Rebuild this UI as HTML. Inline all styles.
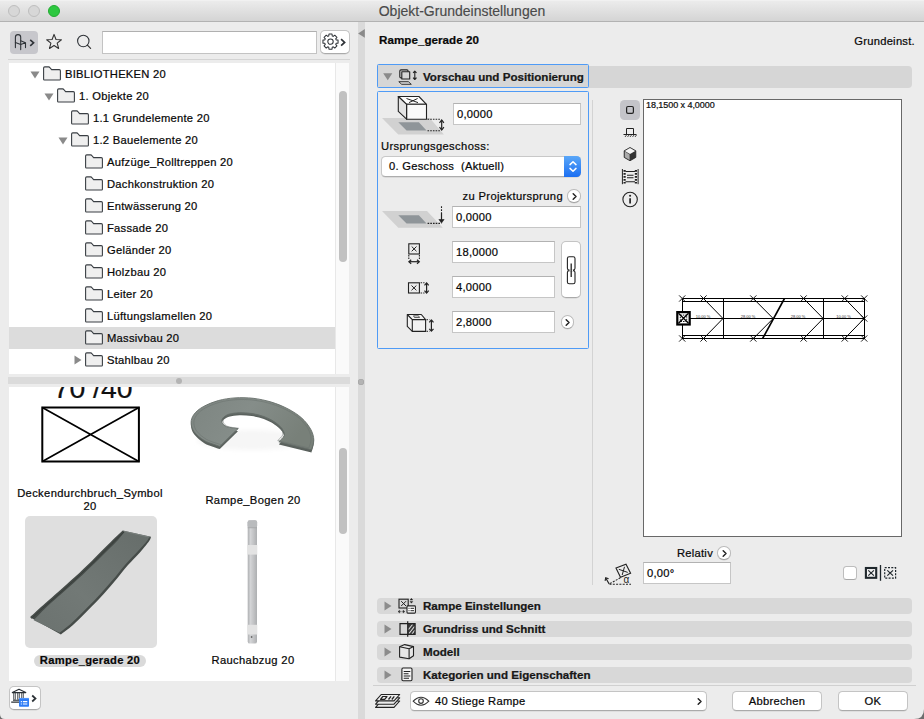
<!DOCTYPE html>
<html>
<head>
<meta charset="utf-8">
<title>Objekt-Grundeinstellungen</title>
<style>
*{box-sizing:border-box;margin:0;padding:0}
html,body{width:924px;height:719px;overflow:hidden;background:#ececec}
body{font-family:"Liberation Sans",sans-serif;font-size:11.2px;letter-spacing:0.270px;color:#080808;position:relative;-webkit-text-stroke:0.220px #080808}
.abs{position:absolute}
#titlebar{left:0;top:0;width:924px;height:22px;background:linear-gradient(#f4f4f4 0,#ebebeb 1.500px,#d4d4d4 100%);border-bottom:1px solid #b2b2b2}
#title{-webkit-text-stroke:0.150px #4a4a4a;left:0;top:3px;width:924px;text-align:center;font-size:14px;letter-spacing:0;color:#4a4a4a;line-height:16px}
.tl{width:12px;height:12px;border-radius:50%;top:5px}
/* left */
.tbtn{border-radius:4px}
#search{left:102px;top:31px;width:215px;height:22.500px;background:#fff;border:1px solid #c3c3c3;border-top-color:#b0b0b0}
#tree{left:9px;top:63px;width:327px;height:311px;background:#fff;overflow:hidden}
.track{background:#fafafa;border-left:1px solid #e8e8e8}
.thumb{background:#c1c1c1;border-radius:4px;width:7.600px}
.row{position:absolute;left:0;height:22px;width:327px;line-height:22px;white-space:nowrap}
.row span{position:absolute;top:0}
.row svg{position:absolute}
.sel{background:#dcdcdc}
#split{left:8px;top:377px;width:342px;height:7px;background:#dbdbdb}
#list{left:9px;top:387px;width:327px;height:294px;background:#fff;overflow:hidden}
#listin{position:absolute;left:0;top:-3px;width:327px;height:297px}
.lbl{position:absolute;text-align:center;white-space:nowrap;line-height:13px;letter-spacing:0.360px}
#vdiv{left:358.200px;top:22px;width:6.800px;height:697px;background:#dadada}
/* right */
.bar{left:377px;width:535px;height:15px;background:#d8d8d8;border-radius:4px}
.bt{font-weight:bold;font-size:11.6px;letter-spacing:0;line-height:15px;white-space:nowrap;color:#1a1a1a}
.inp{background:#fff;border:1px solid #c6c6c6;border-top-color:#b2b2b2;height:22px;line-height:20px;padding-left:3px;white-space:nowrap}
.btn{background:#fff;border:1px solid #c4c4c4;border-bottom-color:#aaa;border-radius:4px;text-align:center;line-height:18px;box-shadow:0 0.5px 0.5px rgba(0,0,0,.12)}
.rbtn{width:13.400px;height:13.400px;margin-left:-0.300px;margin-top:-0.200px;box-shadow:0 0.500px 0.500px rgba(0,0,0,.12);border-radius:50%;background:#fff;border:1px solid #bcbcbc;border-bottom-color:#a4a4a4}
</style>
</head>
<body>
<!-- TITLE BAR -->
<div id="titlebar" class="abs"></div>
<div class="abs tl" style="left:7.700px;background:#d7d7d7;border:1px solid #bebebe"></div>
<div class="abs tl" style="left:27.500px;background:#d7d7d7;border:1px solid #bebebe"></div>
<div class="abs tl" style="left:47.7px;background:#2dc840;border:1px solid #22ab31"></div>
<div id="title" class="abs">Objekt-Grundeinstellungen</div>

<!-- LEFT PANEL -->
<div id="left">
<!-- toolbar -->
<div class="abs tbtn" style="left:9.8px;top:30.6px;width:28.4px;height:23px;background:#c7c7cc"></div>
<svg class="abs" style="left:10px;top:31px" width="29" height="22" viewBox="0 0 29 22"><g fill="none" stroke="#2f3338" stroke-width="1.1" stroke-linejoin="round" stroke-linecap="round"><path d="M5.4 16.6V6.2Q5.4 3.6 8 3.6Q10.7 3.6 10.7 6.2V18.6"/><path d="M5.4 11.6L10.7 13.4L15.5 11.8V16.6M10.7 9.8L15.5 11.8"/><path d="M20.2 8.9L23.6 11.8L20.2 14.8" stroke-width="1.6" stroke-linecap="butt" stroke-linejoin="miter"/></g></svg>
<svg class="abs" style="left:44px;top:31px" width="22" height="22" viewBox="0 0 22 22"><path d="M10.05 3.40L11.99 8.48L17.42 8.76L13.19 12.17L14.61 17.42L10.05 14.45L5.49 17.42L6.91 12.17L2.68 8.76L8.11 8.48Z" fill="none" stroke="#333" stroke-width="1.1" stroke-linejoin="round"/></svg>
<svg class="abs" style="left:74px;top:31px" width="22" height="22" viewBox="0 0 22 22"><circle cx="9.3" cy="10" r="5.7" fill="none" stroke="#2f3338" stroke-width="1.1"/><path d="M13.4 14.1L16.6 17.3" stroke="#333" stroke-width="1.2" stroke-linecap="round"/></svg>
<div id="search" class="abs"></div>
<div class="abs btn" style="left:320px;top:30px;width:30px;height:23.800px;border-radius:5px"></div>
<svg class="abs" style="left:320.600px;top:30.200px" width="29" height="23" viewBox="0 0 29 23"><g fill="none" stroke="#2f3338" stroke-width="1.050" stroke-linejoin="round"><circle cx="9.50" cy="11.60" r="2.700"/><path d="M7.76 5.96L7.97 4.05L11.03 4.05L11.24 5.96L12.25 6.38L13.75 5.18L15.92 7.35L14.72 8.85L15.14 9.86L17.05 10.07L17.05 13.13L15.14 13.34L14.72 14.35L15.92 15.85L13.75 18.02L12.25 16.82L11.24 17.24L11.03 19.15L7.97 19.15L7.76 17.24L6.75 16.82L5.25 18.02L3.08 15.85L4.28 14.35L3.86 13.34L1.95 13.13L1.95 10.07L3.86 9.86L4.28 8.85L3.08 7.35L5.25 5.18L6.75 6.38Z"/><path d="M20.100 9.200L23.600 12.400L20.100 15.600" stroke-width="1.700" stroke-linejoin="miter"/></g></svg>
<div class="abs" style="left:8px;top:59px;width:341.500px;height:1px;background:#d4d4d4"></div>
<!-- tree -->
<div id="tree" class="abs">
<div class="row" style="top:0px"><svg width="10" height="8" viewBox="0 0 10 8" style="left:21px;top:8px"><path d="M0.5 0.5H9.5L5 7.5Z" fill="#8a8a8a"/></svg><svg width="18" height="15" viewBox="0 0 18 15" style="left:34px;top:3px"><path d="M0.6 13.2V2Q0.6 0.9 1.7 0.9H5.6Q6.4 0.9 6.9 1.6L8.6 3.6H16.3Q17.4 3.6 17.4 4.7V13.2Q17.4 14 16.6 14H1.4Q0.6 14 0.6 13.2Z" fill="#efefef" stroke="#3a3f44" stroke-width="1.1" stroke-linejoin="round"/></svg><span style="left:56px">BIBLIOTHEKEN 20</span></div>
<div class="row" style="top:22px"><svg width="10" height="8" viewBox="0 0 10 8" style="left:35px;top:8px"><path d="M0.5 0.5H9.5L5 7.5Z" fill="#8a8a8a"/></svg><svg width="18" height="15" viewBox="0 0 18 15" style="left:48px;top:3px"><path d="M0.6 13.2V2Q0.6 0.9 1.7 0.9H5.6Q6.4 0.9 6.9 1.6L8.6 3.6H16.3Q17.4 3.6 17.4 4.7V13.2Q17.4 14 16.6 14H1.4Q0.6 14 0.6 13.2Z" fill="#efefef" stroke="#3a3f44" stroke-width="1.1" stroke-linejoin="round"/></svg><span style="left:70px">1. Objekte 20</span></div>
<div class="row" style="top:44px"><svg width="18" height="15" viewBox="0 0 18 15" style="left:62px;top:3px"><path d="M0.6 13.2V2Q0.6 0.9 1.7 0.9H5.6Q6.4 0.9 6.9 1.6L8.6 3.6H16.3Q17.4 3.6 17.4 4.7V13.2Q17.4 14 16.6 14H1.4Q0.6 14 0.6 13.2Z" fill="#efefef" stroke="#3a3f44" stroke-width="1.1" stroke-linejoin="round"/></svg><span style="left:84px">1.1 Grundelemente 20</span></div>
<div class="row" style="top:66px"><svg width="10" height="8" viewBox="0 0 10 8" style="left:49px;top:8px"><path d="M0.5 0.5H9.5L5 7.5Z" fill="#8a8a8a"/></svg><svg width="18" height="15" viewBox="0 0 18 15" style="left:62px;top:3px"><path d="M0.6 13.2V2Q0.6 0.9 1.7 0.9H5.6Q6.4 0.9 6.9 1.6L8.6 3.6H16.3Q17.4 3.6 17.4 4.7V13.2Q17.4 14 16.6 14H1.4Q0.6 14 0.6 13.2Z" fill="#efefef" stroke="#3a3f44" stroke-width="1.1" stroke-linejoin="round"/></svg><span style="left:84px">1.2 Bauelemente 20</span></div>
<div class="row" style="top:88px"><svg width="18" height="15" viewBox="0 0 18 15" style="left:76px;top:3px"><path d="M0.6 13.2V2Q0.6 0.9 1.7 0.9H5.6Q6.4 0.9 6.9 1.6L8.6 3.6H16.3Q17.4 3.6 17.4 4.7V13.2Q17.4 14 16.6 14H1.4Q0.6 14 0.6 13.2Z" fill="#efefef" stroke="#3a3f44" stroke-width="1.1" stroke-linejoin="round"/></svg><span style="left:98px">Aufzüge_Rolltreppen 20</span></div>
<div class="row" style="top:110px"><svg width="18" height="15" viewBox="0 0 18 15" style="left:76px;top:3px"><path d="M0.6 13.2V2Q0.6 0.9 1.7 0.9H5.6Q6.4 0.9 6.9 1.6L8.6 3.6H16.3Q17.4 3.6 17.4 4.7V13.2Q17.4 14 16.6 14H1.4Q0.6 14 0.6 13.2Z" fill="#efefef" stroke="#3a3f44" stroke-width="1.1" stroke-linejoin="round"/></svg><span style="left:98px">Dachkonstruktion 20</span></div>
<div class="row" style="top:132px"><svg width="18" height="15" viewBox="0 0 18 15" style="left:76px;top:3px"><path d="M0.6 13.2V2Q0.6 0.9 1.7 0.9H5.6Q6.4 0.9 6.9 1.6L8.6 3.6H16.3Q17.4 3.6 17.4 4.7V13.2Q17.4 14 16.6 14H1.4Q0.6 14 0.6 13.2Z" fill="#efefef" stroke="#3a3f44" stroke-width="1.1" stroke-linejoin="round"/></svg><span style="left:98px">Entwässerung 20</span></div>
<div class="row" style="top:154px"><svg width="18" height="15" viewBox="0 0 18 15" style="left:76px;top:3px"><path d="M0.6 13.2V2Q0.6 0.9 1.7 0.9H5.6Q6.4 0.9 6.9 1.6L8.6 3.6H16.3Q17.4 3.6 17.4 4.7V13.2Q17.4 14 16.6 14H1.4Q0.6 14 0.6 13.2Z" fill="#efefef" stroke="#3a3f44" stroke-width="1.1" stroke-linejoin="round"/></svg><span style="left:98px">Fassade 20</span></div>
<div class="row" style="top:176px"><svg width="18" height="15" viewBox="0 0 18 15" style="left:76px;top:3px"><path d="M0.6 13.2V2Q0.6 0.9 1.7 0.9H5.6Q6.4 0.9 6.9 1.6L8.6 3.6H16.3Q17.4 3.6 17.4 4.7V13.2Q17.4 14 16.6 14H1.4Q0.6 14 0.6 13.2Z" fill="#efefef" stroke="#3a3f44" stroke-width="1.1" stroke-linejoin="round"/></svg><span style="left:98px">Geländer 20</span></div>
<div class="row" style="top:198px"><svg width="18" height="15" viewBox="0 0 18 15" style="left:76px;top:3px"><path d="M0.6 13.2V2Q0.6 0.9 1.7 0.9H5.6Q6.4 0.9 6.9 1.6L8.6 3.6H16.3Q17.4 3.6 17.4 4.7V13.2Q17.4 14 16.6 14H1.4Q0.6 14 0.6 13.2Z" fill="#efefef" stroke="#3a3f44" stroke-width="1.1" stroke-linejoin="round"/></svg><span style="left:98px">Holzbau 20</span></div>
<div class="row" style="top:220px"><svg width="18" height="15" viewBox="0 0 18 15" style="left:76px;top:3px"><path d="M0.6 13.2V2Q0.6 0.9 1.7 0.9H5.6Q6.4 0.9 6.9 1.6L8.6 3.6H16.3Q17.4 3.6 17.4 4.7V13.2Q17.4 14 16.6 14H1.4Q0.6 14 0.6 13.2Z" fill="#efefef" stroke="#3a3f44" stroke-width="1.1" stroke-linejoin="round"/></svg><span style="left:98px">Leiter 20</span></div>
<div class="row" style="top:242px"><svg width="18" height="15" viewBox="0 0 18 15" style="left:76px;top:3px"><path d="M0.6 13.2V2Q0.6 0.9 1.7 0.9H5.6Q6.4 0.9 6.9 1.6L8.6 3.6H16.3Q17.4 3.6 17.4 4.7V13.2Q17.4 14 16.6 14H1.4Q0.6 14 0.6 13.2Z" fill="#efefef" stroke="#3a3f44" stroke-width="1.1" stroke-linejoin="round"/></svg><span style="left:98px">Lüftungslamellen 20</span></div>
<div class="row sel" style="top:264px"><svg width="18" height="15" viewBox="0 0 18 15" style="left:76px;top:3px"><path d="M0.6 13.2V2Q0.6 0.9 1.7 0.9H5.6Q6.4 0.9 6.9 1.6L8.6 3.6H16.3Q17.4 3.6 17.4 4.7V13.2Q17.4 14 16.6 14H1.4Q0.6 14 0.6 13.2Z" fill="#efefef" stroke="#3a3f44" stroke-width="1.1" stroke-linejoin="round"/></svg><span style="left:98px">Massivbau 20</span></div>
<div class="row" style="top:286px"><svg width="8" height="10" viewBox="0 0 8 10" style="left:65px;top:6px"><path d="M0.5 0.5V9.5L7.5 5Z" fill="#8a8a8a"/></svg><svg width="18" height="15" viewBox="0 0 18 15" style="left:76px;top:3px"><path d="M0.6 13.2V2Q0.6 0.9 1.7 0.9H5.6Q6.4 0.9 6.9 1.6L8.6 3.6H16.3Q17.4 3.6 17.4 4.7V13.2Q17.4 14 16.6 14H1.4Q0.6 14 0.6 13.2Z" fill="#efefef" stroke="#3a3f44" stroke-width="1.1" stroke-linejoin="round"/></svg><span style="left:98px">Stahlbau 20</span></div>
</div>
<div class="abs track" style="left:335px;top:63px;width:14px;height:311px"></div>
<div class="abs thumb" style="left:339.300px;top:90.800px;height:171px"></div>
<!-- splitter -->
<div id="split" class="abs"></div>
<div class="abs" style="left:176px;top:377.500px;width:6px;height:6px;border-radius:50%;background:#b4b4b4"></div>
<!-- LIST -->
<div id="list" class="abs"><div id="listin">
<!-- clipped big text -->
<div style="position:absolute;left:44.600px;top:-10.800px;font-size:28.400px;line-height:30px;white-space:nowrap;color:#111;letter-spacing:0">70 /40</div>
<!-- crossed rectangle -->
<svg style="position:absolute;left:31px;top:21px" width="102" height="60" viewBox="0 0 102 60"><rect x="2.3" y="2.5" width="96.6" height="54" fill="#fff" stroke="#000" stroke-width="2"/><path d="M2.3 2.5L98.9 56.5M98.900 2.500L2.300 56.500" stroke="#000" stroke-width="1.700"/></svg>
<div class="lbl" style="left:1px;top:103px;width:160px">Deckendurchbruch_Symbol<br>20</div>
<!-- curved ramp -->
<svg style="position:absolute;left:176px;top:6px" width="140" height="72" viewBox="185 390 140 72">
<defs><linearGradient id="cg" x1="0" y1="0" x2="1" y2="0.3"><stop offset="0" stop-color="#7d8581"/><stop offset="0.5" stop-color="#858d89"/><stop offset="1" stop-color="#788079"/></linearGradient>
<filter id="bl" x="-20%" y="-40%" width="140%" height="180%"><feGaussianBlur stdDeviation="2"/></filter></defs>
<ellipse cx="252" cy="440" rx="55" ry="10" fill="#f6f6f6" filter="url(#bl)"/>
<path d="M219.8 446.4C217.3 445.4 209.0 443.2 204.7 440.8C200.4 438.3 196.4 434.7 194.1 431.7C191.8 428.6 191.1 425.5 191.1 422.6C191.1 419.7 192.1 416.9 194.1 414.2C196.1 411.6 199.1 408.9 203.2 406.7C207.2 404.4 213.0 402.1 218.3 400.6C223.6 399.1 229.2 398.3 235.0 397.9C240.8 397.5 247.1 397.6 253.2 398.3C259.2 399.0 265.6 400.4 271.4 402.1C277.2 403.9 283.0 406.3 288.0 408.9C293.1 411.6 297.9 414.6 301.7 418.0C305.5 421.4 308.7 425.7 310.8 429.4C312.8 433.1 313.7 436.6 313.8 440.0C313.9 443.4 311.9 448.2 311.5 449.8L278.9 441.8C279.8 440.8 283.7 437.7 284.2 435.5C284.7 433.3 283.6 430.9 282.0 428.6C280.3 426.4 277.4 423.8 274.4 421.8C271.4 419.8 267.6 417.9 263.8 416.5C260.0 415.1 255.7 414.1 251.7 413.5C247.6 412.9 243.3 412.6 239.5 412.7C235.8 412.9 231.7 413.4 228.9 414.2C226.2 415.1 224.0 416.6 222.9 418.0C221.7 419.4 221.5 421.1 222.1 422.6C222.8 424.0 224.0 425.7 226.7 426.7C229.3 427.7 236.1 428.3 238.0 428.6Z" transform="translate(0 2.6)" fill="#5a615d"/>
<path d="M219.8 446.4C217.3 445.4 209.0 443.2 204.7 440.8C200.4 438.3 196.4 434.7 194.1 431.7C191.8 428.6 191.1 425.5 191.1 422.6C191.1 419.7 192.1 416.9 194.1 414.2C196.1 411.6 199.1 408.9 203.2 406.7C207.2 404.4 213.0 402.1 218.3 400.6C223.6 399.1 229.2 398.3 235.0 397.9C240.8 397.5 247.1 397.6 253.2 398.3C259.2 399.0 265.6 400.4 271.4 402.1C277.2 403.9 283.0 406.3 288.0 408.9C293.1 411.6 297.9 414.6 301.7 418.0C305.5 421.4 308.7 425.7 310.8 429.4C312.8 433.1 313.7 436.6 313.8 440.0C313.9 443.4 311.9 448.2 311.5 449.8L278.9 441.8C279.8 440.8 283.7 437.7 284.2 435.5C284.7 433.3 283.6 430.9 282.0 428.6C280.3 426.4 277.4 423.8 274.4 421.8C271.4 419.8 267.6 417.9 263.8 416.5C260.0 415.1 255.7 414.1 251.7 413.5C247.6 412.9 243.3 412.6 239.5 412.7C235.8 412.9 231.7 413.4 228.9 414.2C226.2 415.1 224.0 416.6 222.9 418.0C221.7 419.4 221.5 421.1 222.1 422.6C222.8 424.0 224.0 425.7 226.7 426.7C229.3 427.7 236.1 428.3 238.0 428.6Z" fill="url(#cg)" stroke="#656d69" stroke-width="0.9" stroke-linejoin="round"/>
<path d="M219.8 446.4C217.3 445.4 209.0 443.2 204.7 440.8C200.4 438.3 196.4 434.7 194.1 431.7C191.8 428.6 191.1 425.5 191.1 422.6C191.1 419.7 192.1 416.9 194.1 414.2C196.1 411.6 199.1 408.9 203.2 406.7C207.2 404.4 213.0 402.1 218.3 400.6C223.6 399.1 229.2 398.3 235.0 397.9C240.8 397.5 247.1 397.6 253.2 398.3C259.2 399.0 265.6 400.4 271.4 402.1C277.2 403.9 283.0 406.3 288.0 408.9C293.1 411.6 297.9 414.6 301.7 418.0C305.5 421.4 308.7 425.7 310.8 429.4C312.8 433.1 313.7 436.6 313.8 440.0C313.9 443.4 311.9 448.2 311.5 449.8L278.9 441.8C279.8 440.8 283.7 437.7 284.2 435.5C284.7 433.3 283.6 430.9 282.0 428.6C280.3 426.4 277.4 423.8 274.4 421.8C271.4 419.8 267.6 417.9 263.8 416.5C260.0 415.1 255.7 414.1 251.7 413.5C247.6 412.9 243.3 412.6 239.5 412.7C235.8 412.9 231.7 413.4 228.9 414.2C226.2 415.1 224.0 416.6 222.9 418.0C221.7 419.4 221.5 421.1 222.1 422.6C222.8 424.0 224.0 425.7 226.7 426.7C229.3 427.7 236.1 428.3 238.0 428.6Z" transform="translate(252.5 424) scale(0.955 0.93) translate(-252.5 -424)" fill="none" stroke="#6a726e" stroke-width="0.7" opacity="0.8"/>
</svg>
<div class="lbl" style="left:164px;top:110px;width:160px">Rampe_Bogen 20</div>
<!-- selected: straight ramp -->
<div style="position:absolute;left:16px;top:132px;width:132px;height:132px;border-radius:5px;background:#dfdfdf"></div>
<svg style="position:absolute;left:16px;top:132px" width="132" height="132" viewBox="25 516 132 132">
<defs><linearGradient id="rg" x1="1" y1="0" x2="0" y2="1"><stop offset="0" stop-color="#666d6a"/><stop offset="0.600" stop-color="#727976"/><stop offset="1" stop-color="#6b726f"/></linearGradient></defs>
<path d="M30.0 617.2C32.5 614.9 40.3 607.7 45.0 603.5C49.8 599.2 53.4 596.2 58.4 591.8C63.4 587.3 69.5 581.9 75.1 576.8C80.6 571.6 86.8 565.8 91.8 560.9C96.8 556.0 101.2 551.4 105.1 547.5C109.0 543.7 112.2 540.4 115.2 537.5C118.1 534.7 121.4 531.5 122.7 530.4L151.0 536.7C150.7 537.4 151.2 538.1 149.2 540.9C147.2 543.7 142.6 549.4 139.0 553.4C135.5 557.4 132.1 560.3 128.0 565.1C123.9 569.8 119.1 576.2 114.3 581.8C109.6 587.3 104.4 593.2 99.5 598.5C94.5 603.8 89.2 609.0 84.8 613.5C80.3 617.9 76.7 621.7 72.7 625.2C68.8 628.7 62.9 632.8 60.9 634.4Z" fill="#464c49"/>
<path d="M33.7 620.2C36.0 617.8 43.3 610.2 47.9 605.8C52.5 601.5 56.2 598.6 61.2 594.1C66.2 589.7 72.4 584.2 77.9 579.1C83.5 574.0 89.6 568.1 94.6 563.2C99.6 558.4 104.1 553.8 108.0 549.9C111.9 546.0 115.2 542.9 118.0 539.9C120.8 536.8 123.7 533.0 124.8 531.7L148.9 536.7C148.6 537.3 149.4 537.8 147.4 540.4C145.4 543.0 140.4 548.3 136.9 552.2C133.3 556.1 130.0 559.2 125.8 563.9C121.7 568.6 116.9 575.0 112.1 580.6C107.4 586.2 102.2 592.0 97.3 597.3C92.4 602.6 87.0 607.9 82.6 612.3C78.1 616.8 74.4 620.6 70.6 624.0C66.7 627.4 61.4 631.2 59.6 632.7Z" fill="url(#rg)"/>
<path d="M31.5 618.5C34.0 616.2 41.8 609.0 46.5 604.8C51.3 600.6 54.9 597.6 59.9 593.1C64.9 588.7 71.0 583.2 76.6 578.1C82.2 572.9 88.3 567.1 93.3 562.2C98.3 557.4 102.7 552.8 106.6 548.9C110.5 545.0 113.7 541.7 116.7 538.9C119.6 536.0 122.9 532.9 124.2 531.7" fill="none" stroke="#353b38" stroke-width="0.900"/>
<path d="M123.500 531.200L149.500 537" stroke="#8a918e" stroke-width="0.700" fill="none"/>
</svg>
<div style="position:absolute;left:25px;top:270.5px;width:112px;height:12px;border-radius:6px;background:#dadada"></div>
<div class="lbl" style="left:1px;top:269.800px;width:160px;font-weight:bold;letter-spacing:0.300px">Rampe_gerade 20</div>
<!-- pole -->
<svg style="position:absolute;left:236px;top:134px" width="16" height="128" viewBox="245 518 16 128">
<defs><linearGradient id="pg" x1="0" y1="0" x2="1" y2="0"><stop offset="0" stop-color="#aeb0b2"/><stop offset="0.300" stop-color="#d3d4d6"/><stop offset="0.600" stop-color="#c4c5c7"/><stop offset="1" stop-color="#adafb1"/></linearGradient></defs>
<rect x="247.700" y="520.300" width="9.300" height="123.300" rx="2.200" fill="url(#pg)"/>
<rect x="247.500" y="520.300" width="9.700" height="7.500" rx="2.200" fill="#b9bbbd"/>
<rect x="247.700" y="527.400" width="9.300" height="0.800" fill="#a2a4a6"/>
<rect x="247.400" y="545" width="9.900" height="9.600" fill="#e3e3e3"/>
<rect x="247.400" y="624.800" width="9.900" height="9.700" fill="#e3e3e3"/>
<circle cx="251.600" cy="637" r="0.900" fill="#6a6a6a"/>
</svg>
<div class="lbl" style="left:164px;top:270px;width:160px">Rauchabzug 20</div>
</div></div>
<div class="abs track" style="left:335px;top:387px;width:14px;height:294px"></div>
<div class="abs thumb" style="left:339.300px;top:448.200px;height:85.500px"></div>
<!-- bottom-left button -->
<div class="abs btn" style="left:9px;top:686px;width:31.700px;height:23.700px;border-radius:5px"></div>
<svg class="abs" style="left:9px;top:686px" width="32" height="24" viewBox="9 686 32 24"><g fill="none" stroke="#2a3035" stroke-width="1.100"><path d="M12.300 692.600L19 689.200L25.800 692.600Z" stroke-linejoin="round"/><path d="M14.500 693V699.800M18.500 693V699.800M22.500 693V699.800" stroke-width="2.300"/><path d="M14.500 693.300V699.500M18.500 693.300V699.500M22.500 693.300V699.500" stroke="#fff" stroke-width="0.700"/><path d="M13 700.300H25M11.200 702.100H26.500" stroke-width="1.100"/><path d="M32.200 695.500L35.500 698.500L32.200 701.500" stroke-width="1.700"/></g><rect x="19" y="698" width="10" height="8.800" rx="0.800" fill="#2f7df6"/><path d="M20.800 701.600H21.900M22.900 701.600H27.300M20.800 704H21.900M22.900 704H27.300" stroke="#fff" stroke-width="1.100"/><path d="M19 698.400H29" stroke="#5b9bfa" stroke-width="0.800"/></svg>
</div>

<!-- DIVIDER -->
<div id="vdiv" class="abs"></div>
<div class="abs" style="left:358px;top:379px;width:6px;height:6px;border-radius:50%;background:#b4b4b4;box-shadow:inset 0 0 0 0.600px #a4a4a4"></div>
<svg class="abs" style="left:358px;top:28px" width="8" height="11" viewBox="0 0 8 11"><path d="M6.800 1V9.800L0.100 5.400Z" fill="#8a8a8a"/></svg>

<!-- RIGHT PANEL -->
<div id="right">
<div class="abs" style="left:379px;top:33.300px;font-weight:bold;font-size:11.600px;line-height:14px;white-space:nowrap;letter-spacing:0.050px">Rampe_gerade 20</div>
<div class="abs" style="left:815px;top:34px;width:100px;text-align:right;line-height:14px;white-space:nowrap">Grundeinst.</div>

<!-- section 1 header -->
<div class="abs bar" style="top:66px;height:21.5px;border-radius:0 4px 4px 0;left:380px;width:532px;background:#d6d6d6"></div>
<div class="abs" style="left:377px;top:63.8px;width:212px;height:24px;border:1.5px solid #4f9bf6;border-radius:1.500px;background:#d6d6d6"></div>
<svg class="abs" style="left:383px;top:72.8px" width="10" height="8" viewBox="0 0 10 8"><path d="M0.2 0.2H9.3L4.75 7.2Z" fill="#8a8a8a"/></svg>
<svg class="abs" style="left:397px;top:66px" width="22" height="20" viewBox="397 66 22 20"><g fill="none" stroke="#222" stroke-width="1.1" stroke-linejoin="round"><rect x="399.8" y="69.900" width="8.300" height="8" rx="1.200"/><path d="M401.800 71.700H409.700V79H401.800Z" fill="#d6d6d6"/><path d="M398.800 81.700H408.400L411.300 84.300H401.700Z" stroke-width="0.9"/><path d="M414.800 71.200V79.400M413.100 72.900L414.800 71.100L416.500 72.900M413.100 77.700L414.800 79.500L416.500 77.700" stroke-width="1.100"/></g></svg>
<div class="abs bt" style="left:423px;top:68.5px">Vorschau und Positionierung</div>

<!-- section 1 body -->
<div class="abs" style="left:377px;top:90.8px;width:212px;height:258px;border:1.500px solid #4f9bf6;border-radius:1.500px"></div>
<svg class="abs" style="left:380px;top:94px" width="70" height="44" viewBox="380 94 70 44">
<path d="M382 118.100H429.700L443.900 134.500H398.300Z" fill="#d1d1d1"/><path d="M398.300 122.200H418.900L426.500 130.600H406.600Z" fill="#8f9599"/>
<g stroke="#222" stroke-width="1.100" stroke-linejoin="round"><path d="M398.300 96.500H418.900L426.500 104.300H406.600Z" fill="#fdfdfd"/><path d="M406.600 104.300H426.500V119.200H406.600Z" fill="#fafafa"/><path d="M398.300 96.500L406.600 104.300V119.200L398.300 111.400Z" fill="#e4e4e4"/></g>
<path d="M406.500 98.500L418 102.600M409 102.600L417.600 98.500" stroke="#222" stroke-width="1"/>
<path d="M427.500 119.300H441M427.500 130.700H441" stroke="#222" stroke-width="1.1" stroke-dasharray="1.6 1.100"/>
<path d="M441.700 120.400V129.600" stroke="#222" stroke-width="1.2"/><path d="M439.500 122.800L441.700 120L443.900 122.800M439.500 127.200L441.700 130L443.900 127.200" fill="none" stroke="#222" stroke-width="1.2"/>
</svg>
<div class="abs inp" style="left:453px;top:103px;width:128px">0,0000</div>
<div class="abs" style="left:381px;top:139px;line-height:14px;white-space:nowrap;letter-spacing:0.37px">Ursprungsgeschoss:</div>
<!-- select -->
<div class="abs" style="left:380.800px;top:156.400px;width:200.200px;height:20.200px;border-radius:4.500px;background:#fff;border:1px solid #c8c8c8;border-bottom-color:#adadad;box-shadow:0 0.5px 0.5px rgba(0,0,0,.15)"></div>
<div class="abs" style="left:564.200px;top:156.400px;width:16.800px;height:20.200px;border-radius:0 4.500px 4.500px 0;background:linear-gradient(#5aa7f8,#1c6ff2)"></div>
<svg class="abs" style="left:564.600px;top:157px" width="16" height="19" viewBox="0 0 16 19"><path d="M5 7.6L8 4.8L11 7.6M5 11.4L8 14.2L11 11.4" fill="none" stroke="#fff" stroke-width="1.5" stroke-linecap="round" stroke-linejoin="round"/></svg>
<div class="abs" style="left:389px;top:159px;line-height:15px;white-space:pre">0. Geschoss  (Aktuell)</div>

<div class="abs" style="left:400px;top:189px;width:163px;text-align:right;line-height:14px;white-space:nowrap;letter-spacing:0.370px">zu Projektursprung</div>
<div class="abs rbtn" style="left:567.5px;top:189.5px"></div><svg class="abs" style="left:567.5px;top:189.5px" width="13" height="13" viewBox="0 0 13 13"><path d="M5.2 3.8L8 6.5L5.2 9.2" fill="none" stroke="#222" stroke-width="1.5" stroke-linecap="round" stroke-linejoin="round"/></svg>
<svg class="abs" style="left:380px;top:204px" width="70" height="26" viewBox="380 204 70 26">
<path d="M382 211.100H427L442.800 227.800H398.300Z" fill="#d1d1d1"/><path d="M398.300 215.300H418.900L426.500 223.600H406.600Z" fill="#8f9599"/>
<path d="M427.600 223.400H441.500" stroke="#222" stroke-width="1.1" stroke-dasharray="1.600 1.100"/>
<path d="M441.500 206.300V213" stroke="#222" stroke-width="1.100" stroke-dasharray="1.800 1.200"/>
<path d="M441.500 213V221" stroke="#222" stroke-width="1.200"/><path d="M438.900 219.500H444.100L441.500 223Z" fill="#222" stroke="#222" stroke-width="0.6" stroke-linejoin="round"/>
</svg>
<div class="abs inp" style="left:452px;top:206px;width:129px">0,0000</div>

<svg class="abs" style="left:405px;top:240px" width="20" height="26" viewBox="405 240 20 26"><g fill="none" stroke="#222" stroke-width="1.100"><rect x="408.800" y="243.800" width="10.600" height="10.200"/><path d="M411.700 246.500L416.500 251.300M416.500 246.500L411.700 251.300" stroke-width="1"/><path d="M408.800 255V259.500M419.400 255V259.500" stroke-dasharray="1.500 1.100"/><path d="M409.300 261.700H418.900" stroke-width="1.200"/><path d="M411.200 259.700L408.900 261.700L411.200 263.700M417 259.700L419.300 261.700L417 263.700" stroke-width="1.200"/></g></svg>
<div class="abs inp" style="left:452px;top:241px;width:103px">18,0000</div>
<svg class="abs" style="left:405px;top:278px" width="26" height="20" viewBox="405 278 26 20"><g fill="none" stroke="#222" stroke-width="1.100"><rect x="408.500" y="282.800" width="10.900" height="10.200"/><path d="M411.500 285.500L416.400 290.300M416.400 285.500L411.500 290.300" stroke-width="1"/><path d="M420.600 282.800H424.500M420.600 293H424.500" stroke-dasharray="1.500 1.100"/><path d="M426.600 283.200V292.800" stroke-width="1.200"/><path d="M424.500 285.300L426.600 282.900L428.700 285.300M424.500 290.700L426.600 293.100L428.700 290.700" stroke-width="1.200"/></g></svg>
<div class="abs inp" style="left:452px;top:276px;width:103px">4,0000</div>
<svg class="abs" style="left:404px;top:311px" width="32" height="24" viewBox="404 311 32 24"><g fill="none" stroke="#222" stroke-width="1.100" stroke-linejoin="round"><path d="M407.300 314.500H421.300L425.600 319.600V331.400H412.300L407.300 326.400Z" fill="#f2f2f2"/><path d="M407.300 314.500L412.300 319.600H425.600M412.300 319.600V331.400"/><path d="M413.500 315.800H418.500L419.500 317.500H414.500Z" stroke-width="0.700"/><path d="M426.500 319.700H429.500M426.500 331.300H429.500" stroke-dasharray="1.500 1.100" stroke-width="1"/><path d="M431.400 320.200V330.900" stroke-width="1.200"/><path d="M429.300 322.300L431.400 319.900L433.500 322.300M429.300 328.800L431.400 331.200L433.500 328.800" stroke-width="1.200"/></g></svg>
<div class="abs inp" style="left:452px;top:311px;width:103px">2,8000</div>
<div class="abs rbtn" style="left:561.0px;top:315.5px"></div><svg class="abs" style="left:561.0px;top:315.5px" width="13" height="13" viewBox="0 0 13 13"><path d="M5.2 3.8L8 6.5L5.2 9.2" fill="none" stroke="#222" stroke-width="1.5" stroke-linecap="round" stroke-linejoin="round"/></svg>
<!-- link button -->
<div class="abs btn" style="left:561.3px;top:241.300px;width:19.400px;height:56.400px;border-radius:5px"></div>
<svg class="abs" style="left:561px;top:241px" width="20" height="57" viewBox="0 0 20 57"><g fill="none" stroke="#222" stroke-width="1.100"><rect x="6.400" y="15.800" width="7.600" height="13.200" rx="1.800"/><rect x="6.400" y="29.600" width="7.600" height="13.200" rx="1.800"/><path d="M8.500 29.300H12" stroke="#fff" stroke-width="2.200"/><path d="M10.200 22.500V36" stroke-width="1.300"/></g></svg>

<!-- vertical sep -->
<div class="abs" style="left:592px;top:100px;width:1px;height:485px;background:#d3d3d3"></div>

<!-- view buttons -->
<div class="abs" style="left:619.900px;top:99.700px;width:20.200px;height:20.700px;border-radius:4.500px;background:#c4c4c9"></div>
<svg class="abs" style="left:620px;top:100px" width="20" height="20" viewBox="0 0 20 20"><rect x="6.600" y="6.500" width="6.800" height="6.800" rx="1.400" fill="none" stroke="#222" stroke-width="1.200"/></svg>
<svg class="abs" style="left:620px;top:122px" width="20" height="20" viewBox="0 0 20 20"><g fill="none" stroke="#222" stroke-width="1"><path d="M6.5 12V6.5H13.5V12"/><path d="M3.5 12.5H16.5"/><path d="M5 15L6.5 13M7.5 15L9 13M10 15L11.5 13M12.5 15L14 13M15 15L16.5 13" stroke-width="0.8"/></g></svg>
<svg class="abs" style="left:620px;top:144px" width="20" height="20" viewBox="0 0 20 20"><path d="M10 3.5L15.8 6.8V13.4L10 16.8L4.2 13.4V6.8Z" fill="#333" stroke="#222" stroke-width="0.8" stroke-linejoin="round"/><path d="M10 3.9L15.2 6.9L10 9.9L4.8 6.9Z" fill="#f4f4f4"/><path d="M4.8 7.6L9.6 10.4V16L4.8 13.2Z" fill="#aaa"/></svg>
<svg class="abs" style="left:620px;top:166px" width="20" height="20" viewBox="620 166 20 20"><g fill="none" stroke="#222"><path d="M622.400 169V184.200M638.100 169V184.200" stroke-width="1"/><path d="M624.600 170V183.500M635.900 170V183.500" stroke-width="2.200" stroke-dasharray="1.700 1.300"/><path d="M625.500 171.500H635M625.500 181.800H635" stroke-width="1.100"/><path d="M627 175.200H633.500M627 177.800H633.500" stroke-width="1.100"/></g></svg>
<svg class="abs" style="left:620px;top:189px" width="21" height="21" viewBox="0 0 21 21"><circle cx="10.100" cy="10.500" r="7.200" fill="none" stroke="#222" stroke-width="1.100"/><path d="M10.100 9.300V14.600" stroke="#222" stroke-width="1.700"/><circle cx="10.100" cy="6.800" r="1.050" fill="#222"/></svg>

<!-- preview -->
<div class="abs" style="left:643px;top:99px;width:259px;height:438px;background:#fff;border:1px solid #686868"></div>
<div class="abs" style="left:646px;top:100px;font-size:9px;line-height:11px;white-space:nowrap;color:#111;letter-spacing:-0.060px">18,1500 x 4,0000</div>
<svg class="abs" style="left:644px;top:100px" width="257" height="436" viewBox="644 100 257 436">
<path d="M682.5 298.5H864.5M682.5 301.5H864.5M682.5 318.5H864.5M682.5 335.5H864.5M682.5 338.5H864.5M682.5 298.5V338.5M723.5 298.5V338.5M823.5 298.5V338.5M864.5 298.5V338.5" fill="none" stroke="#000" stroke-width="1" shape-rendering="crispEdges"/>
<path d="M703.5 298.5L723 318.5L703.5 338.5M753.3 298.5L773.2 318.5L753.3 338.5M803.6 298.5L823.2 318.5L803.6 338.5M844.7 298.5L864.2 318.5L844.7 338.5" fill="none" stroke="#000" stroke-width="1"/>
<path d="M784.5 298.5L762.6 338.5" stroke="#000" stroke-width="1.600"/>
<path d="M700.4 295.4L706.6 301.6M706.6 295.4L700.4 301.6M700.4 335.4L706.6 341.6M706.6 335.4L700.4 341.6M750.2 295.4L756.4 301.6M756.4 295.4L750.2 301.6M750.2 335.4L756.4 341.6M756.4 335.4L750.2 341.6M800.5 295.4L806.7 301.6M806.7 295.4L800.5 301.6M800.5 335.4L806.7 341.6M806.7 335.4L800.5 341.6M841.6 295.4L847.8 301.6M847.8 295.4L841.6 301.6M841.6 335.4L847.8 341.6M847.8 335.4L841.6 341.6M679.1 295.4L685.3 301.6M685.3 295.4L679.1 301.6M679.1 335.4L685.3 341.6M685.3 335.4L679.1 341.6M861.1 295.4L867.3 301.6M867.3 295.4L861.1 301.6M861.1 335.4L867.3 341.6M867.3 335.4L861.1 341.6M861.1 315.4L867.3 321.6M867.3 315.4L861.1 321.6" fill="none" stroke="#000" stroke-width="0.900"/>
<rect x="677.300" y="312.100" width="12.400" height="12.400" fill="#fff" stroke="#000" stroke-width="2.200"/>
<path d="M678.500 313.300L688.500 323.300M688.500 313.300L678.500 323.300" fill="none" stroke="#000" stroke-width="1.300"/>
<path d="M680.300 315.100h6.400v6.400h-6.400z" fill="none" stroke="#000" stroke-width="0.900" stroke-dasharray="1.500 1"/>
<g font-family="Liberation Sans" font-size="4" fill="#333" text-anchor="middle" letter-spacing="0"><text x="703" y="317.900">10.00 %</text><text x="748" y="317.900">28.00 %</text><text x="798" y="317.900">28.00 %</text><text x="843.500" y="317.900">10.00 %</text></g>
</svg>

<div class="abs" style="left:640px;top:546px;width:73px;text-align:right;line-height:14px;white-space:nowrap">Relativ</div>
<div class="abs rbtn" style="left:717.5px;top:546.5px"></div><svg class="abs" style="left:717.5px;top:546.5px" width="13" height="13" viewBox="0 0 13 13"><path d="M5.2 3.8L8 6.5L5.2 9.2" fill="none" stroke="#222" stroke-width="1.5" stroke-linecap="round" stroke-linejoin="round"/></svg>
<svg class="abs" style="left:602px;top:561px" width="34" height="27" viewBox="602 561 34 27"><g fill="none" stroke="#222" stroke-width="1.100"><path d="M616 568L626 564.200L630.600 573.300L620.500 577.200Z"/><path d="M618.800 569.300L627.700 572.400M624.500 566.800L622.200 575" stroke-width="1"/><path d="M609.500 584.200H631" stroke-dasharray="2 1.300"/><path d="M610 583.600L620.300 577.800" stroke-dasharray="2 1.300"/><path d="M605.900 578.300L609.200 584" stroke-width="1.200"/><path d="M605.100 580.900L605.700 577.800L608.600 578.800" stroke-width="1.100"/></g><text x="623.600" y="582.800" font-family="Liberation Sans" font-size="10" fill="#222" letter-spacing="0">α</text></svg>
<div class="abs inp" style="left:643px;top:562px;width:88px;height:22px">0,00°</div>
<div class="abs" style="left:843.200px;top:566.100px;width:13.600px;height:13.600px;border-radius:3.500px;background:#fff;border:1px solid #bdbdbd;border-bottom-color:#a8a8a8"></div>
<svg class="abs" style="left:862px;top:564px" width="38" height="18" viewBox="862 564 38 18"><g fill="none" stroke="#1f272c"><rect x="865.900" y="568" width="10.300" height="9.800" stroke-width="2.100" fill="#f4f4f4"/><path d="M868.300 570.400L873.900 575.600M873.900 570.400L868.300 575.600" stroke-width="1.200"/><path d="M880.500 565V580.800" stroke-width="1.300"/><rect x="884.700" y="567.700" width="10.900" height="10.500" stroke-width="1.200" stroke-dasharray="2 1.300"/><path d="M887.300 570.400L893 575.600M893 570.400L887.300 575.600" stroke-width="1.200"/></g></svg>

<!-- collapsed sections -->
<div class="abs bar" style="top:598.3px;height:15.500px"></div>
<div class="abs bar" style="top:621.3px;height:15.500px"></div>
<div class="abs bar" style="top:644.3px;height:15.500px"></div>
<div class="abs bar" style="top:667.3px;height:15.500px"></div>
<svg class="abs" style="left:384px;top:600.5px" width="8" height="10" viewBox="0 0 8 10"><path d="M0.5 0.5V9.5L7.5 5Z" fill="#8c8c8c"/></svg><svg class="abs" style="left:384px;top:623.5px" width="8" height="10" viewBox="0 0 8 10"><path d="M0.5 0.5V9.5L7.5 5Z" fill="#8c8c8c"/></svg><svg class="abs" style="left:384px;top:646.5px" width="8" height="10" viewBox="0 0 8 10"><path d="M0.5 0.5V9.5L7.5 5Z" fill="#8c8c8c"/></svg><svg class="abs" style="left:384px;top:669.5px" width="8" height="10" viewBox="0 0 8 10"><path d="M0.5 0.5V9.5L7.5 5Z" fill="#8c8c8c"/></svg>
<svg class="abs" style="left:397px;top:596px" width="22" height="20" viewBox="397 596 22 20"><g fill="none" stroke="#222" stroke-width="1.100"><rect x="399" y="599.200" width="9.200" height="8.800"/><path d="M401.200 601.200L406 606M406 601.200L401.200 606" stroke-width="1"/><path d="M411.400 598.300L410 600H412.800ZM411.400 603.200L410 601.500H412.800Z" fill="#222" stroke-width="0.400"/><path d="M398 611.600L399.700 610.200V613ZM404.800 611.600L403.100 610.200V613Z" fill="#222" stroke-width="0.400"/><path d="M400.500 611.600H402.500" stroke-width="0.900" stroke-dasharray="0.800 0.800"/><rect x="407" y="605.900" width="8.400" height="7.200" rx="0.800" fill="#fff"/><path d="M408.500 608.300H409.500M410.500 608.300H414M408.500 610.700H409.500M410.500 610.700H414" stroke-width="1"/></g></svg>
<svg class="abs" style="left:397px;top:619px" width="22" height="20" viewBox="397 619 22 20"><g fill="none" stroke="#222" stroke-width="1.200"><path d="M408 623.600H415.100V634.400H408Z" fill="#3a3a3a" stroke="none"/><path d="M409 633.500L414.500 626.500M408.500 629.500L412.500 624.500M412 634L415 630" stroke="#e0e0e0" stroke-width="1.100"/><path d="M400 623.600H415.100V634.400H400Z"/><path d="M407.700 621.200V636.800"/></g></svg>
<svg class="abs" style="left:397px;top:642px" width="22" height="20" viewBox="397 642 22 20"><g fill="#e6e6e6" stroke="#222" stroke-width="1.100" stroke-linejoin="round"><path d="M399.600 646.700L404.700 644.600L413.500 646.600V655.800L409.100 658.800L399.600 657.100Z"/><path d="M399.600 646.700L409.100 648.800L413.500 646.600M409.100 648.800V658.800" fill="none"/></g></svg>
<svg class="abs" style="left:397px;top:665px" width="22" height="20" viewBox="397 665 22 20"><g fill="none" stroke="#222" stroke-width="1.100"><rect x="401.900" y="668" width="10.100" height="12.800" rx="1.200" fill="#f4f4f4"/><path d="M403.700 671.500H410.300M403.700 673.800H408.500M403.700 676H410.300M403.700 678.200H409" stroke-width="1.100"/></g></svg>
<div class="abs bt" style="left:423px;top:598px">Rampe Einstellungen</div>
<div class="abs bt" style="left:423px;top:621px">Grundriss und Schnitt</div>
<div class="abs bt" style="left:423px;top:644px">Modell</div>
<div class="abs bt" style="left:423px;top:667px">Kategorien und Eigenschaften</div>

<div class="abs" style="left:373px;top:684.800px;width:543px;height:1px;background:#d0d0d0"></div>
<!-- bottom -->
<svg class="abs" style="left:373px;top:691px" width="30" height="22" viewBox="373 691 30 22"><g fill="#ececec" stroke="#222" stroke-width="1.100" stroke-linejoin="round"><path d="M375.600 707.400L381.200 701H399.700L394 707.400Z"/><path d="M375.600 704.200L381.200 697.800H399.700L394 704.200Z"/><path d="M375.600 700.900L381.200 694.500H399.700L394 700.900Z"/><path d="M380.500 699.300L382.800 696.500H387L384.700 699.300Z" stroke-width="1.200"/><path d="M388.500 699.500L391 696.300M391.800 699.500L394.300 696.300" stroke-width="1.300"/></g></svg>
<div class="abs btn" style="left:409.600px;top:691.300px;width:297.600px;height:19.600px;border-radius:4.500px"></div>
<svg class="abs" style="left:412px;top:695px" width="18" height="13" viewBox="412 695 18 13"><path d="M413.200 701.200Q421 693.200 428.800 701.200Q421 709.200 413.200 701.200Z" fill="none" stroke="#333" stroke-width="1.100"/><circle cx="421" cy="701.100" r="2.300" fill="none" stroke="#333" stroke-width="1.100"/></svg>
<div class="abs" style="left:435px;top:694px;line-height:15px;white-space:nowrap">40 Stiege Rampe</div>
<svg class="abs" style="left:693px;top:695px" width="13" height="13" viewBox="0 0 13 13"><path d="M5.2 3.8L8 6.5L5.2 9.2" fill="none" stroke="#222" stroke-width="1.5" stroke-linecap="round" stroke-linejoin="round"/></svg>
<div class="abs btn" style="left:732.400px;top:691.300px;width:89.300px;height:19.600px;line-height:18.200px;border-radius:4.500px">Abbrechen</div>
<div class="abs btn" style="left:838px;top:691.300px;width:69.600px;height:19.600px;line-height:18.200px;border-radius:4.500px">OK</div>
<!-- window corner -->
<svg class="abs" style="left:0;top:714px" width="5" height="5" viewBox="0 0 5 5"><path d="M0 0V5H5Q0 5 0 0Z" fill="#6d6d6d"/></svg>
<svg class="abs" style="left:914px;top:709px" width="10" height="10" viewBox="0 0 10 10"><path d="M10 0V10H0Q10 10 10 0Z" fill="#6d6d6d"/></svg>
</div>
</body>
</html>
